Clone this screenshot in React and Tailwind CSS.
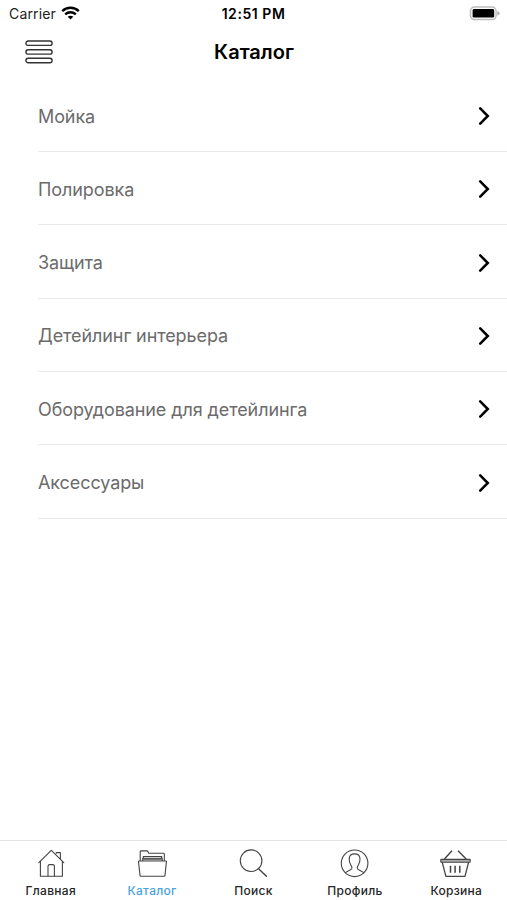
import { useState } from 'react';

const categories = [
  'Мойка',
  'Полировка',
  'Защита',
  'Детейлинг интерьера',
  'Оборудование для детейлинга',
  'Аксессуары',
];

function TabIcon({ children }) {
  return (
    <svg
      width="32"
      height="30"
      viewBox="0 0 32 30"
      fill="none"
      stroke="#444444"
      strokeWidth="1.1"
      strokeLinejoin="round"
      strokeLinecap="round"
    >
      {children}
    </svg>
  );
}

const HomeIcon = () => (
  <TabIcon>
    <path d="M3.8 14.6 16.3 2.4 28.8 14.6" />
    <path d="M5.4 13.4V28.3H27.4V13.4" />
    <path d="M13 28V18.3Q13 16.6 14.7 16.6H17.7Q19.4 16.6 19.4 18.3V28" />
    <path d="M21.2 5.2V4.6H25.4V11" />
  </TabIcon>
);

const FolderIcon = () => (
  <TabIcon>
    <path d="M4.2 12.6V3.8Q4.2 2.9 5.1 2.9H10.9Q11.7 2.9 12 3.7L12.7 5.2H27.4Q28.3 5.2 28.3 6.1V12.6" />
    <path d="M6.6 12.4V10.6H26.3V12.4M7.4 10.4V8.6H25.6V10.4" strokeWidth="1.3" />
    <path d="M6.6 11.4H26.3" strokeWidth="1.6" stroke="#777777" />
    <path d="M3.3 13H29.7Q30.5 13 30.4 13.8L29 27.4Q28.9 28.3 28 28.3H5Q4.1 28.3 4 27.4L2.5 13.8Q2.4 13 3.3 13Z" />
  </TabIcon>
);

const SearchIcon = () => (
  <TabIcon>
    <circle cx="14.1" cy="12.7" r="10.8" />
    <path d="M21.3 20.5 29.4 28.3" strokeWidth="1.4" />
  </TabIcon>
);

const ProfileIcon = () => (
  <TabIcon>
    <circle cx="15.6" cy="15.3" r="13.3" />
    <path d="M6.4 24.8C7.8 22.8 11.8 22.6 12.7 20.8 13.2 19.7 12.8 18.3 11.9 17.2 10.5 15.4 10.1 12.8 10.2 10.6 10.4 7.7 12.5 5.9 15.6 5.9S20.8 7.7 21 10.6C21.1 12.8 20.7 15.4 19.3 17.2 18.4 18.3 18 19.7 18.5 20.8 19.4 22.6 23.4 22.8 24.8 24.8" />
  </TabIcon>
);

const BasketIcon = () => (
  <TabIcon>
    <path d="M4.4 11 12 2.7M26.2 11 18 2.7" strokeWidth="1.4" strokeLinecap="butt" />
    <path d="M2.2 14.2 5.9 28.3H25L28.6 14.2" strokeWidth="1.3" />
    <rect x="0.8" y="11.4" width="29.4" height="2.8" rx="0.5" fill="#aaaaaa" />
    <path d="M10.5 17.8V24.8M15.1 17.8V24.8M19.8 17.8V24.8" strokeWidth="1.5" strokeLinecap="butt" />
  </TabIcon>
);

const tabs = [
  { id: 'home', label: 'Главная', Icon: HomeIcon },
  { id: 'catalog', label: 'Каталог', Icon: FolderIcon },
  { id: 'search', label: 'Поиск', Icon: SearchIcon },
  { id: 'profile', label: 'Профиль', Icon: ProfileIcon },
  { id: 'cart', label: 'Корзина', Icon: BasketIcon },
];

function StatusBar() {
  return (
    <div className="grid h-[26px] grid-cols-3 items-center pl-[9px] pr-[7px] text-black">
      <div className="flex items-center gap-[5px] text-[14px] tracking-[0.15px] text-[#222222]">
        <span>Carrier</span>
        <svg width="19" height="14" viewBox="0 0 19 14" fill="none" stroke="#000000" strokeWidth="2.4">
          <path d="M1.2 5.1C5.8 0.7 13.2 0.7 17.8 5.1" />
          <path d="M4.2 8.3C7.2 5.5 11.8 5.5 14.8 8.3" />
          <path d="M9.5 13.4 6.7 10.7C8.3 9.3 10.7 9.3 12.3 10.7Z" fill="#000000" stroke="none" />
        </svg>
      </div>
      <div className="pr-[2px] text-center text-[14px] font-semibold tracking-[0.55px] whitespace-nowrap">12:51 PM</div>
      <div className="flex justify-end">
        <svg width="31" height="15" viewBox="0 0 31 15">
          <rect x="1.5" y="1" width="25.6" height="12.6" rx="4" fill="#ffffff" stroke="#bdbdbd" strokeWidth="1.5" />
          <rect x="3.6" y="3" width="21.6" height="8.6" rx="1.4" fill="#000000" />
          <path d="M28.4 4.9Q30.6 5.8 30.6 7.3T28.4 9.7Z" fill="#aaaaaa" />
        </svg>
      </div>
    </div>
  );
}

function Header() {
  return (
    <header className="grid h-[52px] grid-cols-[100px_1fr_100px] items-center">
      <button className="pl-[25px]" aria-label="Меню">
        <svg width="28" height="24" viewBox="0 0 28 24" fill="none" stroke="#333333" strokeWidth="1.4">
          <rect x="0.9" y="1" width="26.2" height="4.4" rx="2.2" />
          <rect x="0.9" y="9.7" width="26.2" height="4.4" rx="2.2" />
          <rect x="0.9" y="18.3" width="26.2" height="4.4" rx="2.2" />
        </svg>
      </button>
      <h1 className="pl-px text-center text-[20px] font-semibold text-black">Каталог</h1>
    </header>
  );
}

function App() {
  const [activeTab, setActiveTab] = useState('catalog');

  return (
    <div className="flex h-screen w-full flex-col bg-white font-['Inter','Liberation_Sans',sans-serif]">
      <StatusBar />
      <Header />

      <main className="flex-1 pt-[0.9px] pl-[38px]">
        {categories.map((name) => (
          <div
            key={name}
            className="flex h-[73.3px] items-center justify-between border-b border-[#e8e8e8] pr-4 pt-[2px]"
          >
            <span className="text-[18px] tracking-[-0.09px] text-[#6b6b6b]">{name}</span>
            <svg width="13" height="18" viewBox="0 0 13 18" fill="none" stroke="#000000" strokeWidth="2.5">
              <path d="M2.2 1.4 9.8 9 2.2 16.6" strokeLinecap="round" />
            </svg>
          </div>
        ))}
      </main>

      {/* Bottom navigation */}
      <nav className="grid h-[60px] grid-cols-5 border-t-[1.5px] border-[#e4e4e4]">
        {tabs.map(({ id, label, Icon }) => (
          <button
            key={id}
            onClick={() => setActiveTab(id)}
            className="flex flex-col items-center pt-[7px]"
          >
            <Icon />
            <span
              className={`mt-[5px] text-[12px] leading-[16px] font-medium tracking-[0.3px] ${
                activeTab === id ? 'text-[#4aa3df]' : 'text-[#262626]'
              }`}
            >
              {label}
            </span>
          </button>
        ))}
      </nav>
    </div>
  );
}

export default App;
